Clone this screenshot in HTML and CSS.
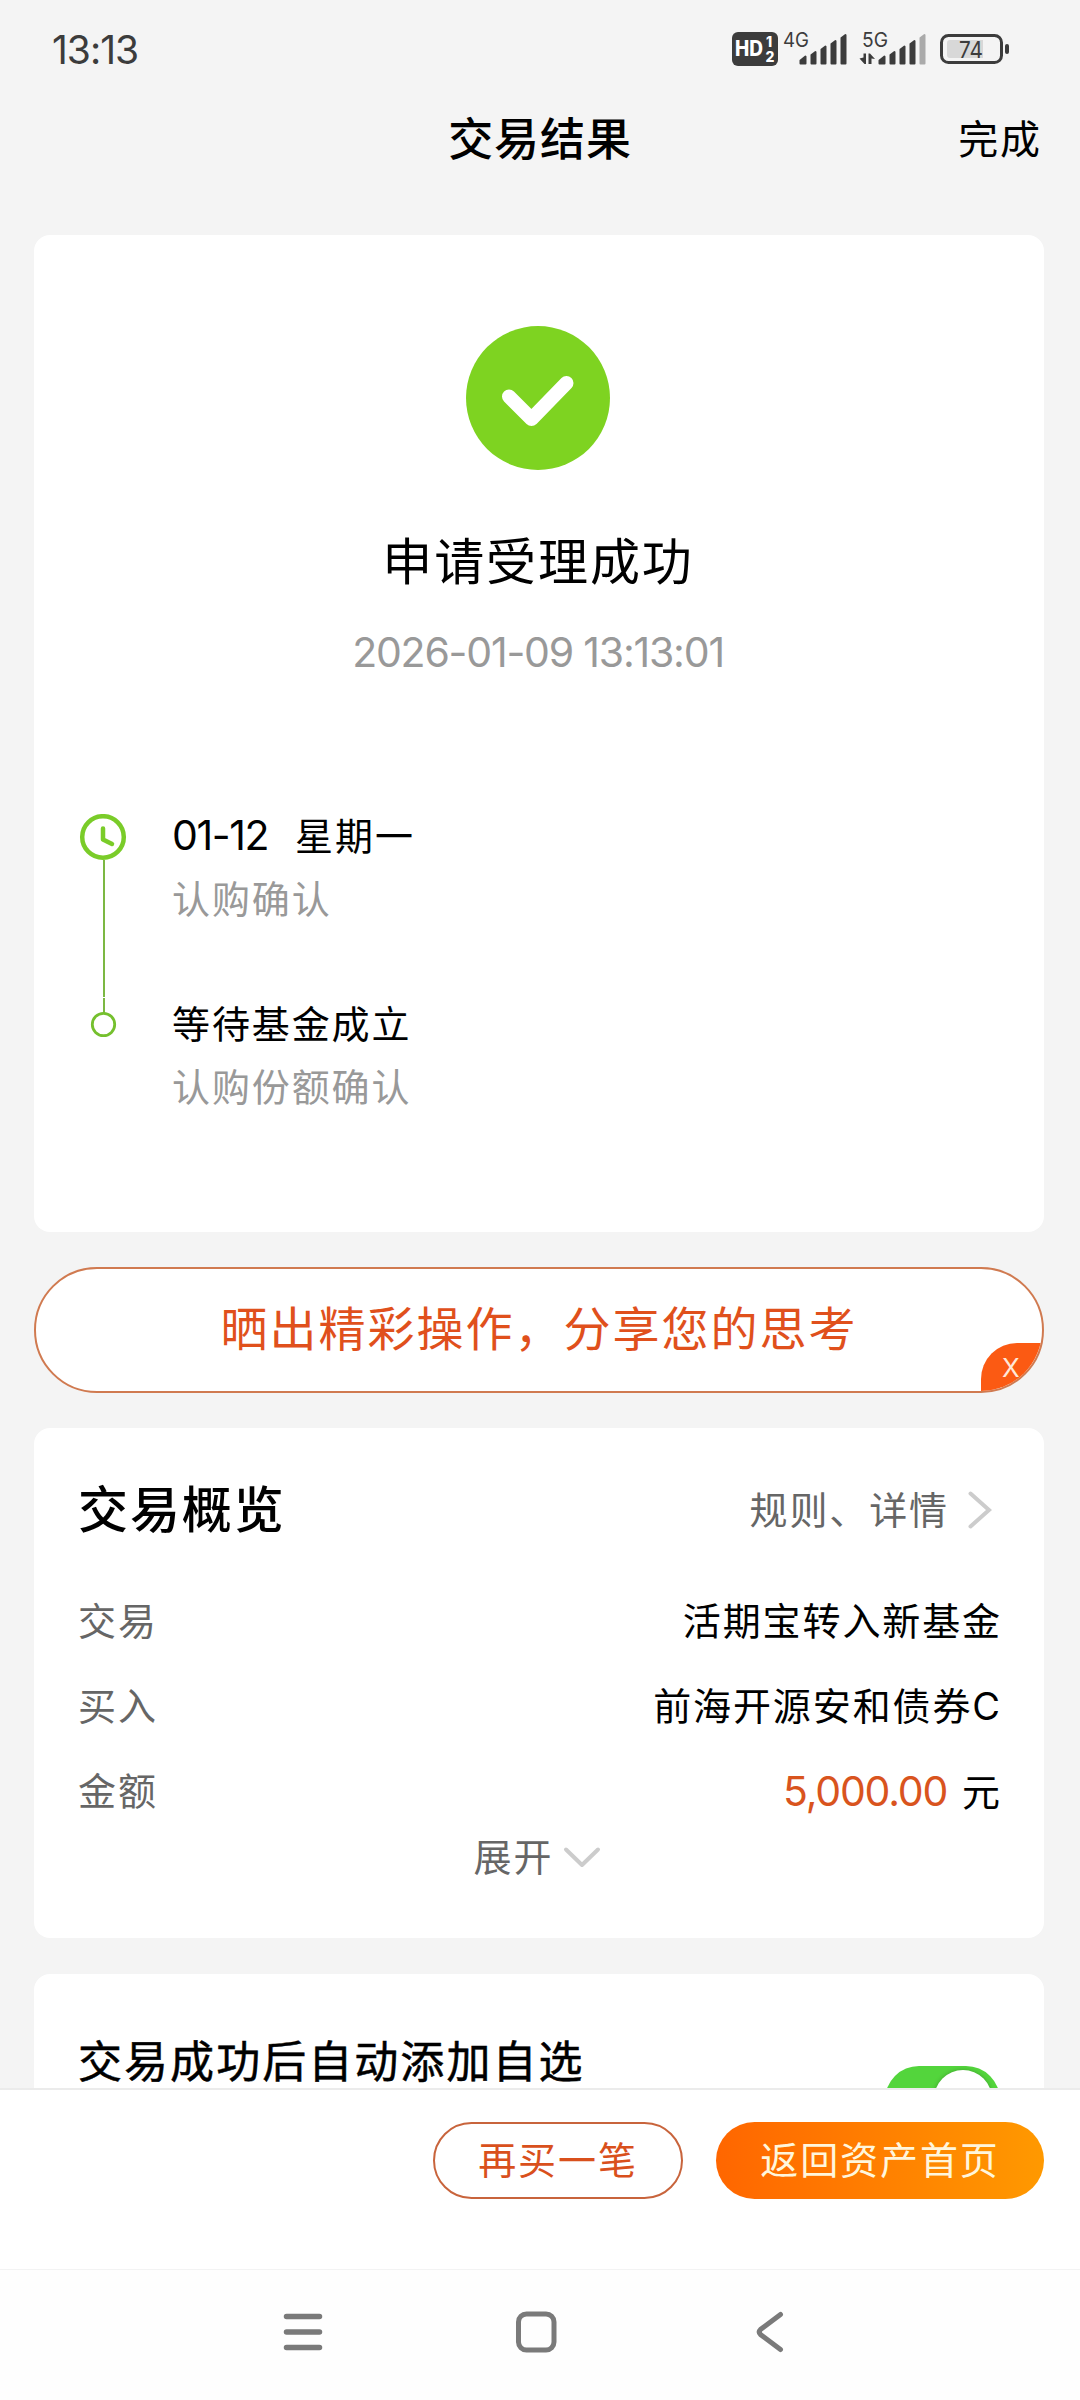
FILE: index.html
```html
<!DOCTYPE html>
<html lang="zh-CN">
<head>
    <meta charset="UTF-8">
    <meta name="viewport" content="width=device-width, initial-scale=1.0">
    <title>交易结果</title>
    <link rel="stylesheet" href="styles.css">
</head>
<body>
    <div class="status-bar">
        <div class="time">13:13</div>
        <svg class="status-icons" width="280" height="40" viewBox="0 0 280 40">
            <!-- HD -->
            <rect x="2" y="4" width="46" height="34" rx="6" fill="#3c3c3c"/>
            <text class="hd" x="5" y="28" textLength="28" lengthAdjust="spacingAndGlyphs">HD</text>
            <text class="hd-num" x="36" y="19">1</text>
            <text class="hd-num" x="35.500" y="34">2</text>
            <!-- 4G -->
            <text class="net" x="53" y="19" textLength="26" lengthAdjust="spacingAndGlyphs">4G</text>
            <g fill="#3c3c3c" stroke="#3c3c3c" stroke-width="2" stroke-linejoin="round">
                <path d="M70.500 35.500v-3l5-4v7z"/>
                <path d="M81.500 35.500v-8.500l4-3v11.500z"/>
                <path d="M91.500 35.500v-14l4-3v17z"/>
                <path d="M101.500 35.500v-19.500l4-3v22.500z"/>
                <path d="M111.500 35.500v-25.500l4-3v28.500z"/>
            </g>
            <!-- 5G -->
            <text class="net" x="132" y="19" textLength="26" lengthAdjust="spacingAndGlyphs">5G</text>
            <path d="M129.500 30.500l4-1v-4h2.500v10.500h-1.500zM138.500 36v-10.500h1.500l5 5.500-3.500-.5v5.500z" fill="#3c3c3c"/>
            <g fill="#3c3c3c" stroke="#3c3c3c" stroke-width="2" stroke-linejoin="round">
                <path d="M149.500 35.500v-3l5-4v7z"/>
                <path d="M160.500 35.500v-8.500l4-3v11.500z"/>
                <path d="M170.500 35.500v-14l4-3v17z"/>
                <path d="M180.500 35.500v-19.500l4-3v22.500z"/>
                <path d="M190.500 35.500v-25.500l4-3v28.500z" fill="#aaa" stroke="#aaa"/>
            </g>
            <!-- battery -->
            <rect x="211.500" y="7.500" width="60" height="27" rx="7" fill="none" stroke="#3c3c3c" stroke-width="3"/>
            <path d="M220 12h33v18h-33q-3 0-3-3v-12q0-3 3-3z" fill="#d8d8d8"/>
            <text class="battery" x="229" y="30" textLength="24" lengthAdjust="spacingAndGlyphs">74</text>
            <rect x="275" y="16" width="4" height="10" rx="2" fill="#3c3c3c"/>
        </svg>
    </div>

    <div class="header">
        <div class="title">交易结果</div>
        <div class="done">完成</div>
    </div>

    <div class="content">
        <div class="card result">
            <svg class="success" width="144" height="144" viewBox="0 0 144 144">
                <circle cx="72" cy="72" r="72" fill="#7ed321"/>
                <path d="M43 70.500l22.500 22.500L100.500 57" fill="none" stroke="#fff" stroke-width="14" stroke-linecap="round" stroke-linejoin="round"/>
            </svg>
            <div class="result-title">申请受理成功</div>
            <div class="result-time">2026-01-09 13:13:01</div>

            <div class="timeline">
                <svg class="line" width="50" height="230" viewBox="0 0 50 230">
                    <path d="M26 46v137" stroke="#7cb843" stroke-width="2"/>
                    <path d="M26 184v15" stroke="#7cb843" stroke-width="2"/>
                    <circle cx="25" cy="23" r="20.800" fill="none" stroke="#7acc29" stroke-width="4.500"/>
                    <path d="M25 14.500v11l9 4.500" fill="none" stroke="#7acc29" stroke-width="4.500" stroke-linecap="round" stroke-linejoin="round"/>
                    <circle cx="25.500" cy="210.500" r="11.200" fill="#fff" stroke="#75c02e" stroke-width="2.800"/>
                </svg>
                <div class="steps">
                    <div class="step">
                        <div class="step-title"><span class="num">01-12</span>星期一</div>
                        <div class="step-desc">认购确认</div>
                    </div>
                    <div class="step">
                        <div class="step-title">等待基金成立</div>
                        <div class="step-desc">认购份额确认</div>
                    </div>
                </div>
            </div>
        </div>

        <div class="share">
            <span>晒出精彩操作，分享您的思考</span>
            <div class="close">X</div>
        </div>

        <div class="card summary">
            <div class="summary-head">
                <div class="summary-title">交易概览</div>
                <div class="rules">规则、详情
                    <svg width="24" height="40" viewBox="0 0 24 40">
                        <path d="M2.500 3.500L21 20L2.500 36.500" fill="none" stroke="#ccc" stroke-width="4" stroke-linecap="round"/>
                    </svg>
                </div>
            </div>
            <div class="row">
                <div class="label">交易</div>
                <div class="value">活期宝转入新基金</div>
            </div>
            <div class="row">
                <div class="label">买入</div>
                <div class="value">前海开源安和债券C</div>
            </div>
            <div class="row">
                <div class="label">金额</div>
                <div class="value"><span class="amount">5,000.00</span>元</div>
            </div>
            <div class="expand">展开
                <svg width="38" height="24" viewBox="0 0 38 24">
                    <path d="M3 4.500L19 20L35 4.500" fill="none" stroke="#ccc" stroke-width="4" stroke-linecap="round" stroke-linejoin="round"/>
                </svg>
            </div>
        </div>

        <div class="card favorite">
            <div class="favorite-title">交易成功后自动添加自选</div>
            <div class="toggle"><div class="knob"></div></div>
        </div>
    </div>

    <div class="footer">
        <div class="btn btn-again">再买一笔</div>
        <div class="btn btn-home">返回资产首页</div>
    </div>

    <div class="nav-bar">
        <svg width="50" height="50" viewBox="0 0 50 50">
            <path d="M8.500 9.500h33M8.500 25h33M8.500 40.500h33" stroke="#7a7a7a" stroke-width="5.500" stroke-linecap="round"/>
        </svg>
        <svg width="50" height="50" viewBox="0 0 50 50">
            <rect x="6.500" y="7" width="35.500" height="36" rx="8" fill="none" stroke="#7a7a7a" stroke-width="5"/>
        </svg>
        <svg width="50" height="50" viewBox="0 0 50 50">
            <path d="M35.500 7.500L15.500 22.500Q13 25 15.500 27.500L35.500 42.500" fill="none" stroke="#7a7a7a" stroke-width="5" stroke-linecap="round"/>
        </svg>
    </div>
</body>
</html>
```

FILE: styles.css
```css
* {
    box-sizing: border-box;
}

body {
    display: flex;
    flex-direction: column;
    width: 1080px;
    height: 2400px;
    margin: 0;
    overflow: hidden;
    background-color: #f4f4f4;
    font-family: Inter, 'Noto Sans CJK SC', sans-serif;
    font-size: 38px;
    letter-spacing: 1.9px;
    color: #000;
}

svg {
    display: block;
    flex-shrink: 0;
}

/* status bar */
.status-bar {
    display: flex;
    justify-content: space-between;
    height: 98px;
    padding: 28px 70px 0 52px;
}

.time {
    font-size: 39px;
    line-height: 43px;
    letter-spacing: -1px;
    color: #3c3c3c;
}

.status-icons {
    letter-spacing: 0;
    fill: #3c3c3c;
}

.hd {
    font-size: 21px;
    font-weight: 800;
    fill: #fff;
}

.hd-num {
    font-size: 14px;
    font-weight: 800;
    fill: #fff;
}

.net {
    font-size: 20px;
}

.battery {
    font-size: 23px;
}

/* header */
.header {
    display: grid;
    grid-template-columns: 1fr auto 1fr;
    align-items: center;
    height: 84px;
    padding: 0 38px;
    line-height: 60px;
}

.title {
    grid-column: 2;
    font-size: 45px;
    font-weight: 500;
    letter-spacing: 0.9px;
}

.done {
    justify-self: end;
    font-size: 40px;
    letter-spacing: 1.9px;
}

/* content */
.content {
    display: flex;
    flex-direction: column;
    flex: 1;
    min-height: 0;
    padding: 53px 36px 0 34px;
    overflow: hidden;
}

.card {
    flex-shrink: 0;
    background-color: #fff;
    border-radius: 16px;
}

.result {
    display: flex;
    flex-direction: column;
    align-items: center;
    height: 997px;
    padding: 91px 45px 0 43px;
}

.result-title {
    margin-top: 61px;
    font-size: 50px;
    line-height: 62px;
}

.result-time {
    margin-top: 34px;
    font-size: 41px;
    line-height: 50px;
    letter-spacing: -1.2px;
    color: #999;
}

.timeline {
    display: flex;
    align-self: stretch;
    gap: 44px;
    margin-top: 137px;
    padding-left: 1px;
}

.steps {
    margin-top: -1px;
}

.step {
    height: 188px;
}

.step-title,
.step-desc {
    line-height: 46px;
}

.step-desc {
    margin-top: 17px;
    color: #999;
}

.num {
    margin-right: 27px;
    font-size: 41px;
    line-height: 1;
    letter-spacing: -1.4px;
}

/* share */
.share {
    position: relative;
    display: flex;
    flex-shrink: 0;
    align-items: center;
    justify-content: center;
    height: 126px;
    margin: 35px 0;
    padding-bottom: 3px;
    overflow: hidden;
    background-color: #fff;
    border: 2px solid #d07a50;
    border-radius: 63px;
    font-size: 47px;
    line-height: 60px;
    letter-spacing: 2px;
    color: #e0501c;
}

.close {
    position: absolute;
    right: 0;
    bottom: 0;
    width: 61px;
    height: 48px;
    padding-left: 21px;
    background-color: #fb5a13;
    border-top-left-radius: 36px;
    font-size: 26px;
    line-height: 49px;
    color: #ffe8d8;
}

/* summary */
.summary {
    height: 510px;
    padding: 42px 43px 0 44px;
}

.summary-head {
    display: flex;
    align-items: center;
    justify-content: space-between;
    height: 80px;
    margin-bottom: 29px;
    line-height: 60px;
}

.summary-title {
    font-size: 50px;
    font-weight: 500;
}

.rules {
    display: flex;
    align-items: center;
    gap: 19px;
    padding-right: 9px;
    color: #666;
}

.row {
    display: flex;
    justify-content: space-between;
    height: 85px;
    line-height: 85px;
}

.label {
    color: #666;
}

.value {
    margin-right: -1px;
}

.amount {
    margin-right: 15px;
    font-size: 41px;
    letter-spacing: -1.2px;
    color: #d9541e;
}

.expand {
    display: flex;
    align-items: center;
    justify-content: center;
    gap: 10px;
    height: 46px;
    padding-right: 4px;
    line-height: 46px;
    color: #666;
}

/* favorite */
.favorite {
    display: flex;
    align-items: flex-start;
    justify-content: space-between;
    height: 220px;
    margin-top: 36px;
    padding: 57px 44px 0;
}

.favorite-title {
    font-size: 44px;
    line-height: 62px;
    letter-spacing: 2.05px;
    -webkit-text-stroke: 0.5px #000;
}

.toggle {
    width: 115px;
    height: 68px;
    margin-top: 35px;
    padding: 4px 8px;
    background-color: #53d53c;
    border-radius: 34px;
}

.knob {
    width: 58px;
    height: 58px;
    margin-left: auto;
    background-color: #fff;
    border-radius: 50%;
    box-shadow: 0 0 4px rgba(0, 0, 0, 0.25);
}

/* footer */
.footer {
    display: flex;
    justify-content: flex-end;
    gap: 33px;
    height: 181px;
    padding: 32px 36px 0 0;
    background-color: #fff;
    border-top: 2px solid #ebebeb;
}

.btn {
    height: 77px;
    border-radius: 39px;
    line-height: 76px;
    text-align: center;
}

.btn-again {
    width: 250px;
    border: 2px solid #c8643c;
    line-height: 72px;
    color: #d9501c;
}

.btn-home {
    width: 328px;
    background: linear-gradient(to right, #f60, #f90);
    color: #fff6dc;
}

.nav-bar {
    display: flex;
    align-items: center;
    justify-content: space-between;
    height: 131px;
    padding: 0 285px 7px 278px;
    background-color: #fefefe;
    border-top: 1px solid #f3f3f3;
}
```
